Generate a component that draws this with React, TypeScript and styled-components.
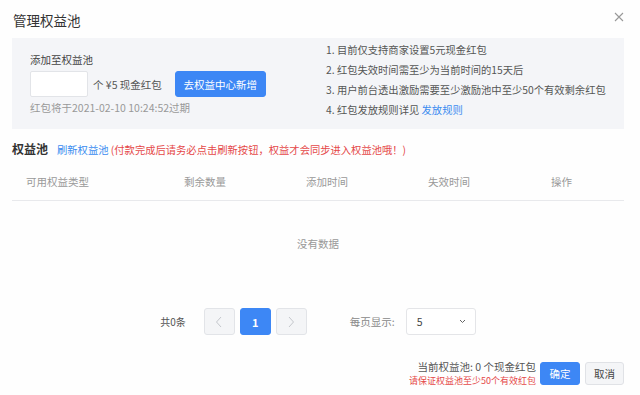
import React from "react";
import styled, { createGlobalStyle } from "styled-components";

const GlobalStyle = createGlobalStyle`
  html, body {
    margin: 0;
    padding: 0;
    background: #fefefe;
  }
  body {
    font-family: "Noto Sans CJK SC", "Noto Sans", sans-serif;
    color: #333;
  }
  * {
    box-sizing: border-box;
  }
`;

const BLUE = "#3d87f5";

const Modal = styled.div`
  width: 640px;
  height: 395px;
  padding: 0 16px 0 12px;
  overflow: hidden;
`;

const Header = styled.div`
  height: 38px;
  display: flex;
  align-items: center;
  justify-content: space-between;
`;

const Title = styled.div`
  font-size: 13.5px;
  line-height: 16px;
  color: #333;
  padding-left: 1px;
  margin-top: 2px;
`;

const Close = styled.button`
  border: 0;
  background: none;
  padding: 0;
  width: 10px;
  height: 10px;
  margin-top: -5px;
  display: flex;
  cursor: pointer;
`;

const Panel = styled.div`
  height: 91px;
  background: #f4f5f8;
  display: flex;
  padding-left: 18px;
`;

const AddColumn = styled.div`
  width: 296px;
  padding-top: 15px;
`;

const Label = styled.div`
  font-size: 10.5px;
  line-height: 14px;
  color: #444;
`;

const AddRow = styled.div`
  display: flex;
  align-items: center;
  margin-top: 4px;
`;

const AmountInput = styled.input`
  width: 58px;
  height: 26px;
  border: 1px solid #e2e4e8;
  border-radius: 2px;
  background: #fff;
  outline: none;
`;

const Unit = styled.span`
  font-size: 10.5px;
  color: #555;
  margin-left: 5px;
`;

const Button = styled.button<{ $primary?: boolean; $w: number; $h: number }>`
  width: ${(p) => p.$w}px;
  height: ${(p) => p.$h}px;
  border-radius: 3px;
  border: 1px solid ${(p) => (p.$primary ? BLUE : "#e0e2e6")};
  background: ${(p) => (p.$primary ? BLUE : "#f4f5f7")};
  color: ${(p) => (p.$primary ? "#fff" : "#444")};
  font-family: inherit;
  font-size: 10.5px;
  padding: 0;
  cursor: pointer;
`;

const AddButton = styled(Button)`
  margin-left: 13px;
`;

const Expire = styled.div`
  font-size: 10.5px;
  line-height: 14px;
  color: #999;
  margin-top: 4px;
`;

const Rules = styled.ol`
  list-style: none;
  margin: 0;
  padding: 2px 0 0 0;
`;

const Rule = styled.li`
  font-size: 10.3px;
  line-height: 20px;
  color: #555;
`;

const Link = styled.a`
  color: #3b8cf0;
  text-decoration: none;
  cursor: pointer;
`;

const SectionHead = styled.div`
  display: flex;
  align-items: baseline;
  margin-top: 12px;
  line-height: 16px;
`;

const SectionTitle = styled.span`
  font-size: 12px;
  font-weight: 700;
  color: #333;
  margin-right: 9px;
`;

const Warn = styled.span`
  font-size: 10.3px;
  color: #e54848;
`;

const TableHead = styled.div`
  display: grid;
  grid-template-columns: 158px 122px 122px 123px 1fr;
  height: 38px;
  margin-top: 5px;
  align-items: center;
  border-bottom: 1px solid #e8e9ec;
`;

const HeadCell = styled.div`
  font-size: 10.5px;
  color: #999;
  padding-left: 14px;
`;

const Empty = styled.div`
  height: 84px;
  display: flex;
  align-items: center;
  justify-content: center;
  font-size: 10.5px;
  color: #999;
`;

const Pager = styled.div`
  display: flex;
  align-items: center;
  justify-content: center;
  margin-top: 23px;
  height: 27px;
`;

const Total = styled.span`
  font-size: 10px;
  color: #555;
  margin-right: 18px;
`;

const PageBtn = styled.button<{ $active?: boolean }>`
  width: 31px;
  height: 27px;
  margin-right: 5px;
  border-radius: 3px;
  border: 1px solid ${(p) => (p.$active ? BLUE : "#e2e4e8")};
  background: ${(p) => (p.$active ? BLUE : "#f4f5f7")};
  color: #fff;
  font-family: inherit;
  font-size: 11px;
  font-weight: 700;
  display: flex;
  align-items: center;
  justify-content: center;
  padding: 0;
`;

const SizeLabel = styled.span`
  font-size: 10.5px;
  color: #888;
  margin-left: 38px;
  margin-right: 11px;
`;

const Select = styled.div`
  width: 70px;
  height: 27px;
  border: 1px solid #e4e5e8;
  border-radius: 3px;
  background: #fff;
  display: flex;
  align-items: center;
  justify-content: space-between;
  padding: 0 9px 0 10px;
  font-size: 10.5px;
  color: #444;
`;

const Footer = styled.div`
  display: flex;
  justify-content: flex-end;
  align-items: center;
  margin-top: 24px;
  gap: 5px;
`;

const Summary = styled.div`
  text-align: right;
  margin-right: -1px;
  display: flex;
  flex-direction: column;
  align-items: flex-end;
`;

const SummaryLine = styled.div`
  font-size: 10.5px;
  line-height: 15px;
  color: #555;
`;

const SummaryWarn = styled.div`
  font-size: 9px;
  line-height: 13px;
  color: #e54848;
`;

const Chevron = ({ dir }: { dir: "left" | "right" }) => (
  <svg width="8" height="12" viewBox="0 0 8 12">
    <polyline
      points={dir === "left" ? "6,1 1.5,6 6,11" : "2,1 6.5,6 2,11"}
      fill="none"
      stroke="#c4c7cc"
      strokeWidth="1"
    />
  </svg>
);

const App = () => {
  return (
    <>
      <GlobalStyle />
      <Modal>
        <Header>
          <Title>管理权益池</Title>
          <Close aria-label="close">
            <svg width="10" height="10" viewBox="0 0 10 10">
              <path d="M1 1L9 9M9 1L1 9" stroke="#999" strokeWidth="1.1" />
            </svg>
          </Close>
        </Header>

        <Panel>
          <AddColumn>
            <Label>添加至权益池</Label>
            <AddRow>
              <AmountInput />
              <Unit>个 ¥5 现金红包</Unit>
              <AddButton $primary $w={91} $h={26}>
                去权益中心新增
              </AddButton>
            </AddRow>
            <Expire>红包将于2021-02-10 10:24:52过期</Expire>
          </AddColumn>
          <Rules>
            <Rule>1. 目前仅支持商家设置5元现金红包</Rule>
            <Rule>2. 红包失效时间需至少为当前时间的15天后</Rule>
            <Rule>3. 用户前台透出激励需要至少激励池中至少50个有效剩余红包</Rule>
            <Rule>
              4. 红包发放规则详见 <Link>发放规则</Link>
            </Rule>
          </Rules>
        </Panel>

        <SectionHead>
          <SectionTitle>权益池</SectionTitle>
          <Warn>
            <Link>刷新权益池</Link> (付款完成后请务必点击刷新按钮，权益才会同步进入权益池哦！)
          </Warn>
        </SectionHead>

        <TableHead>
          {["可用权益类型", "剩余数量", "添加时间", "失效时间", "操作"].map((h) => (
            <HeadCell key={h}>{h}</HeadCell>
          ))}
        </TableHead>
        <Empty>没有数据</Empty>

        <Pager>
          <Total>共0条</Total>
          <PageBtn>
            <Chevron dir="left" />
          </PageBtn>
          <PageBtn $active>1</PageBtn>
          <PageBtn>
            <Chevron dir="right" />
          </PageBtn>
          <SizeLabel>每页显示:</SizeLabel>
          <Select>
            <span>5</span>
            <svg width="7" height="5" viewBox="0 0 7 5">
              <polyline points="1,1 3.5,3.5 6,1" fill="none" stroke="#666" strokeWidth="1" />
            </svg>
          </Select>
        </Pager>

        <Footer>
          <Summary>
            <SummaryLine>当前权益池: 0 个现金红包</SummaryLine>
            <SummaryWarn>请保证权益池至少50个有效红包</SummaryWarn>
          </Summary>
          <Button $primary $w={40} $h={23}>
            确定
          </Button>
          <Button $w={39} $h={23}>
            取消
          </Button>
        </Footer>
      </Modal>
    </>
  );
};

export default App;
